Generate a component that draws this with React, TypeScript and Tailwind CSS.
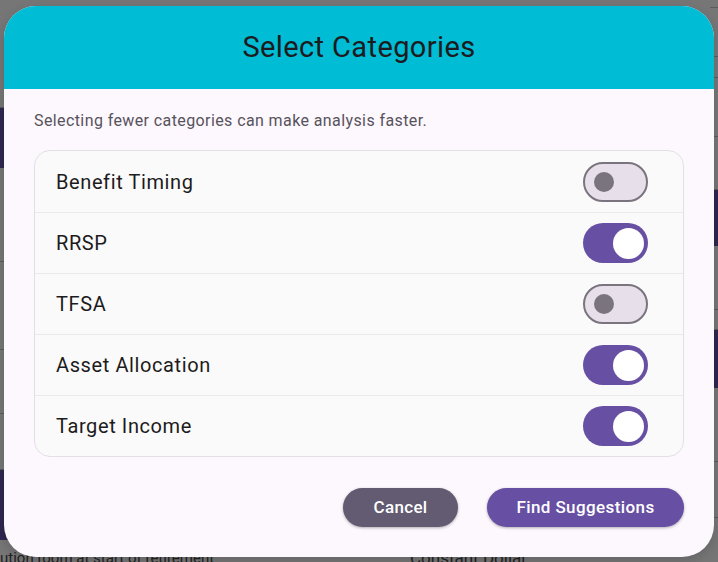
import React, { useState } from "react";

const items = [
  { label: "Benefit Timing", on: false },
  { label: "RRSP", on: true },
  { label: "TFSA", on: false },
  { label: "Asset Allocation", on: true },
  { label: "Target Income", on: true },
];

function Toggle({ on, onClick }: { on: boolean; onClick: () => void }) {
  return on ? (
    <button
      onClick={onClick}
      className="flex h-[40px] w-[65px] items-center justify-end rounded-full bg-[#674fa3] pr-[4px]"
    >
      <span className="block h-[31px] w-[31px] rounded-full bg-white" />
    </button>
  ) : (
    <button
      onClick={onClick}
      className="flex h-[40px] w-[65px] items-center justify-start rounded-full border-2 border-[#79747e] bg-[#e7e0ea] pl-[9px]"
    >
      <span className="block h-[20px] w-[20px] rounded-full bg-[#79747e]" />
    </button>
  );
}

function Strip({ blocks }: { blocks: { h: number; dark?: boolean }[] }) {
  return (
    <div className="flex w-[8px] flex-col">
      {blocks.map((b, i) => (
        <div
          key={i}
          className={b.dark ? "bg-[#2f2750]" : "border-b border-[#5c5c5c]"}
          style={{ height: b.h }}
        />
      ))}
    </div>
  );
}

export default function App() {
  const [state, setState] = useState(items.map((i) => i.on));
  return (
    <div
      className="relative h-[562px] w-[718px] overflow-hidden bg-[#767676]"
      style={{ fontFamily: "Roboto, 'Noto Sans', sans-serif" }}
    >
      {/* dimmed page behind */}
      <div className="flex h-full flex-col">
        <div className="flex flex-1 justify-between">
          <Strip
            blocks={[
              { h: 108 },
              { h: 60, dark: true },
              { h: 94 },
              { h: 88 },
              { h: 64 },
              { h: 56 },
              { h: 70, dark: true },
            ]}
          />
          <Strip
            blocks={[
              { h: 8 },
              { h: 49 },
              { h: 21 },
              { h: 59 },
              { h: 53 },
              { h: 56, dark: true },
              { h: 64 },
              { h: 20 },
              { h: 58, dark: true },
              { h: 74 },
              { h: 56 },
            ]}
          />
        </div>
        <div className="flex h-[10px] items-start overflow-hidden text-[#222]">
          <span className="w-[410px] text-[15px] leading-[12px]">ution room at start of retirement</span>
          <span className="text-[17px] leading-[12px]">Constant Dollar</span>
        </div>
      </div>

      {/* dialog */}
      <div className="absolute left-[4px] top-[6px] flex h-[551px] w-[710px] flex-col overflow-hidden rounded-[32px] bg-[#fdf7fe] shadow-[0_4px_12px_rgba(0,0,0,0.15)]">
        <div className="flex h-[83px] items-center justify-center bg-[#00bcd4]">
          <h1 className="text-[29px] font-normal tracking-[0.4px] text-[#1d1b20]">Select Categories</h1>
        </div>
        <div className="flex flex-1 flex-col px-[30px]">
          <p className="mt-[22px] text-[16px] leading-[20px] tracking-[0.4px] text-[#57535b]">
            Selecting fewer categories can make analysis faster.
          </p>
          <div className="mt-[19px] overflow-hidden rounded-[16px] border border-[#e2e0e4] bg-[#fafafa]">
            {items.map((it, i) => (
              <div
                key={it.label}
                className={`flex h-[61px] items-center justify-between pl-[21px] pr-[35px] ${
                  i > 0 ? "border-t border-[#ebe9ec]" : ""
                }`}
              >
                <span className="text-[20px] font-normal tracking-[0.6px] text-[#1d1b20]">{it.label}</span>
                <Toggle
                  on={state[i]}
                  onClick={() => setState((s) => s.map((v, j) => (j === i ? !v : v)))}
                />
              </div>
            ))}
          </div>
          <div className="mt-[31px] flex justify-end gap-[29px]">
            <button className="h-[39px] w-[115px] rounded-full bg-[#625b71] text-[17px] font-medium tracking-[0.3px] text-white shadow-[0_1px_3px_rgba(0,0,0,0.3)]">
              Cancel
            </button>
            <button className="h-[39px] w-[197px] rounded-full bg-[#6750a4] text-[17px] font-medium tracking-[0.4px] text-white shadow-[0_1px_3px_rgba(0,0,0,0.3)]">
              Find Suggestions
            </button>
          </div>
        </div>
      </div>
    </div>
  );
}
